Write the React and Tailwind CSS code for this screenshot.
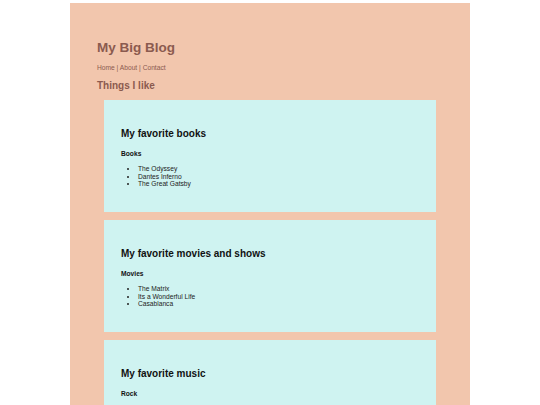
import React from 'react';

const sections = [
  {
    title: 'My favorite books',
    heading: 'Books',
    items: ['The Odyssey', 'Dantes Inferno', 'The Great Gatsby'],
  },
  {
    title: 'My favorite movies and shows',
    heading: 'Movies',
    items: ['The Matrix', 'Its a Wonderful Life', 'Casablanca'],
  },
  {
    title: 'My favorite music',
    heading: 'Rock',
    items: ['Led Zeppelin', 'The Beatles', 'Pink Floyd'],
  },
];

const Card = ({ title, heading, items }) => (
  <div className="mx-[7px] mb-[8px] bg-[#cff3f1] pt-[28px] pb-[24.5px] px-[17px] text-[#111]">
    <h2 className="text-[10px] leading-[12px] font-bold">{title}</h2>
    <h4 className="mt-[9.5px] text-[6.67px] leading-[8px] font-bold">{heading}</h4>
    <ul className="mt-[7.5px] list-disc pl-[17px] text-[6.67px] leading-[7.5px] text-[#222]">
      {items.map((item) => (
        <li key={item}>{item}</li>
      ))}
    </ul>
  </div>
);

export default function App() {
  return (
    <div
      className="min-h-screen bg-white pt-[3px]"
      style={{ fontFamily: '"Liberation Sans", Arial, sans-serif' }}
    >
      <div className="mx-auto w-[400px] bg-[#f2c6ad] pt-[36.5px] px-[27px] pb-[20px]">
        <h1 className="text-[13.5px] leading-[15px] font-bold text-[#8b5a4f]">My Big Blog</h1>
        <nav className="mt-[9px] text-[6.67px] leading-[8px] text-[#8b5a4f]">
          Home | About | Contact
        </nav>
        <h2 className="mt-[8px] text-[10px] leading-[12px] font-bold text-[#8b5a4f]">Things I like</h2>
        <div className="mt-[8.5px]">
          {sections.map((s) => (
            <Card key={s.title} {...s} />
          ))}
        </div>
      </div>
    </div>
  );
}
